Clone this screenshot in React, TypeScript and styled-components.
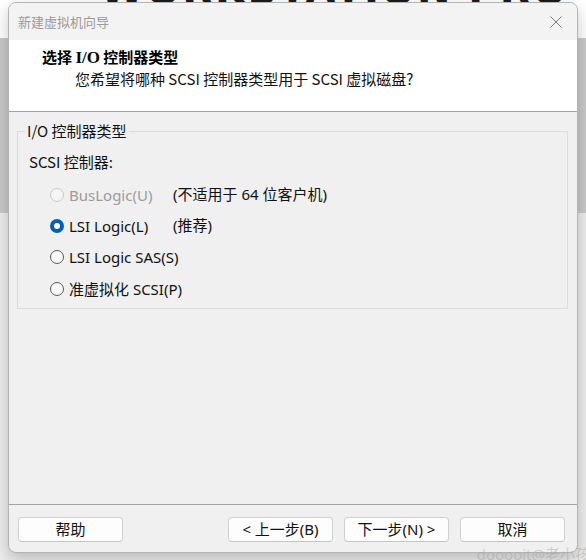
import React from "react";
import styled, { createGlobalStyle } from "styled-components";

const Global = createGlobalStyle`
  html, body { margin: 0; padding: 0; }
  body {
    width: 586px; height: 560px; overflow: hidden;
    font-family: "Noto Sans", "Noto Sans CJK SC", sans-serif;
    background: #ffffff;
  }
`;

const Desktop = styled.div`
  position: relative;
  width: 586px;
  height: 560px;
  overflow: hidden;
  background: linear-gradient(to bottom, #ffffff 0 38px, #ededed 38px);
`;

const BackPanel = styled.div`
  position: absolute;
  left: 0;
  top: 38px;
  width: 586px;
  height: 175px;
  background: #c9c9c9;
`;

const BannerText = styled.div`
  position: absolute;
  left: 100px;
  top: -33px;
  font-family: "DejaVu Sans", sans-serif;
  font-weight: 900;
  font-size: 40px;
  letter-spacing: 2px;
  color: #1b1b1b;
  white-space: nowrap;
  span { color: #7b3fc4; }
`;

const Window = styled.div`
  position: absolute;
  left: 8px;
  top: 2px;
  width: 570px;
  height: 551px;
  box-sizing: border-box;
  display: flex;
  flex-direction: column;
  background: #f0f0f0;
  border: 1px solid #b4b4b4;
  border-radius: 8px;
  box-shadow: 0 6px 16px rgba(0, 0, 0, 0.22);
  overflow: hidden;
`;

const TitleBar = styled.div`
  height: 37px;
  display: flex;
  align-items: center;
  justify-content: space-between;
  padding: 0 14px 0 9px;
  background: #f3f3f3;
  color: #9a9a9a;
  font-size: 13px;
  font-family: "Noto Sans CJK SC", sans-serif;
`;

const CloseBtn = styled.div`
  width: 14px;
  height: 14px;
  display: flex;
  align-items: center;
  justify-content: center;
`;

const Header = styled.div`
  height: 72px;
  box-sizing: border-box;
  background: #ffffff;
  border-bottom: 1px solid #a3a3a3;
  padding: 7px 0 0 33px;
  display: flex;
  flex-direction: column;
`;

const HeaderTitle = styled.div`
  font-size: 15px;
  font-weight: 700;
  color: #000;
  line-height: 19px;
  font-family: "Noto Sans CJK SC", sans-serif;
  span { font-family: "Liberation Serif", serif; font-size: 17px; }
`;

const HeaderSub = styled.div`
  font-size: 15px;
  color: #111;
  line-height: 20px;
  margin: 2px 0 0 33px;
  font-family: "Noto Sans CJK SC", sans-serif;
`;

const Body = styled.div`
  flex: 1;
  padding: 9px 9px 0 8px;
`;

const GroupBox = styled.fieldset`
  margin: 0;
  padding: 11px 0 10px 11px;
  border: 1px solid #dcdcdc;
  border-radius: 0;
  min-width: 0;
`;

const Legend = styled.legend`
  margin-left: -4px;
  padding: 0 2px;
  font-size: 15px;
  line-height: 20px;
  color: #111;
  font-family: "Noto Sans CJK SC", sans-serif;
`;

const FieldLabel = styled.div`
  font-size: 15px;
  line-height: 20px;
  color: #111;
  font-family: "Noto Sans CJK SC", sans-serif;
  margin-bottom: 13px;
`;

const OptionList = styled.div`
  display: flex;
  flex-direction: column;
  gap: 11px;
  padding-left: 21px;
`;

const OptionRow = styled.div`
  display: grid;
  grid-template-columns: 123px auto;
  align-items: center;
  height: 20px;
`;

const RadioLabel = styled.label<{ $disabled?: boolean }>`
  display: flex;
  align-items: center;
  gap: 5px;
  font-size: 15px;
  color: ${(p) => (p.$disabled ? "#9c9c9c" : "#111")};
  font-family: "Noto Sans", "Noto Sans CJK SC", sans-serif;
  white-space: nowrap;
`;

const Radio = styled.span<{ $checked?: boolean; $disabled?: boolean }>`
  width: 14px;
  height: 14px;
  box-sizing: border-box;
  border-radius: 50%;
  flex: none;
  display: flex;
  align-items: center;
  justify-content: center;
  border: ${(p) =>
    p.$checked ? "none" : p.$disabled ? "1px solid #c9c9c9" : "1px solid #5c5c5c"};
  background: ${(p) => (p.$checked ? "#005fb8" : p.$disabled ? "#f5f5f5" : "#f7f7f7")};
  &::after {
    content: "";
    display: ${(p) => (p.$checked ? "block" : "none")};
    width: 6px;
    height: 6px;
    border-radius: 50%;
    background: #fff;
  }
`;

const Note = styled.span`
  font-size: 15px;
  color: #111;
  font-family: "Noto Sans", "Noto Sans CJK SC", sans-serif;
  margin-top: -4px;
  white-space: nowrap;
`;

const Footer = styled.div`
  height: 48px;
  box-sizing: border-box;
  border-top: 1px solid #a3a3a3;
  display: flex;
  align-items: flex-start;
  justify-content: space-between;
  padding: 12px 12px 0 9px;
`;

const ButtonGroup = styled.div`
  display: flex;
  gap: 11px;
`;

const Button = styled.button`
  width: 105px;
  height: 25px;
  box-sizing: border-box;
  background: #fdfdfd;
  border: 1px solid #d0d0d0;
  border-bottom-color: #c4c4c4;
  border-radius: 4px;
  font-size: 15px;
  color: #111;
  font-family: "Noto Sans", "Noto Sans CJK SC", sans-serif;
  padding: 0;
  display: flex;
  align-items: center;
  justify-content: center;
  line-height: 1;
`;

const Watermark = styled.div`
  position: absolute;
  right: -4px;
  bottom: -4px;
  font-family: "Noto Sans", "Noto Sans CJK SC", sans-serif;
  font-size: 15px;
  color: rgba(160, 160, 160, 0.45);
  white-space: nowrap;
`;

const options = [
  { label: "BusLogic(U)", note: "(不适用于 64 位客户机)", disabled: true },
  { label: "LSI Logic(L)", note: "(推荐)", checked: true },
  { label: "LSI Logic SAS(S)" },
  { label: "准虚拟化 SCSI(P)" },
];

export default function App() {
  return (
    <>
      <Global />
      <Desktop>
        <BackPanel />
        <BannerText>
          WORKSTATION PRO <span>17</span>
        </BannerText>
        <Window>
          <TitleBar>
            <span>新建虚拟机向导</span>
            <CloseBtn>
              <svg width="14" height="14" viewBox="0 0 14 14">
                <path d="M1.5 1.5 L12.5 12.5 M12.5 1.5 L1.5 12.5" stroke="#7a7a7a" strokeWidth="1" fill="none" />
              </svg>
            </CloseBtn>
          </TitleBar>
          <Header>
            <HeaderTitle>
              选择 <span>I/O</span> 控制器类型
            </HeaderTitle>
            <HeaderSub>您希望将哪种 SCSI 控制器类型用于 SCSI 虚拟磁盘?</HeaderSub>
          </Header>
          <Body>
            <GroupBox>
              <Legend>I/O 控制器类型</Legend>
              <FieldLabel>SCSI 控制器:</FieldLabel>
              <OptionList>
                {options.map((o) => (
                  <OptionRow key={o.label}>
                    <RadioLabel $disabled={o.disabled}>
                      <Radio $checked={o.checked} $disabled={o.disabled} />
                      {o.label}
                    </RadioLabel>
                    {o.note ? <Note>{o.note}</Note> : <span />}
                  </OptionRow>
                ))}
              </OptionList>
            </GroupBox>
          </Body>
          <Footer>
            <Button>帮助</Button>
            <ButtonGroup>
              <Button>&lt; 上一步(B)</Button>
              <Button>下一步(N) &gt;</Button>
              <Button>取消</Button>
            </ButtonGroup>
          </Footer>
        </Window>
        <Watermark>dooooit@老小孩</Watermark>
      </Desktop>
    </>
  );
}
